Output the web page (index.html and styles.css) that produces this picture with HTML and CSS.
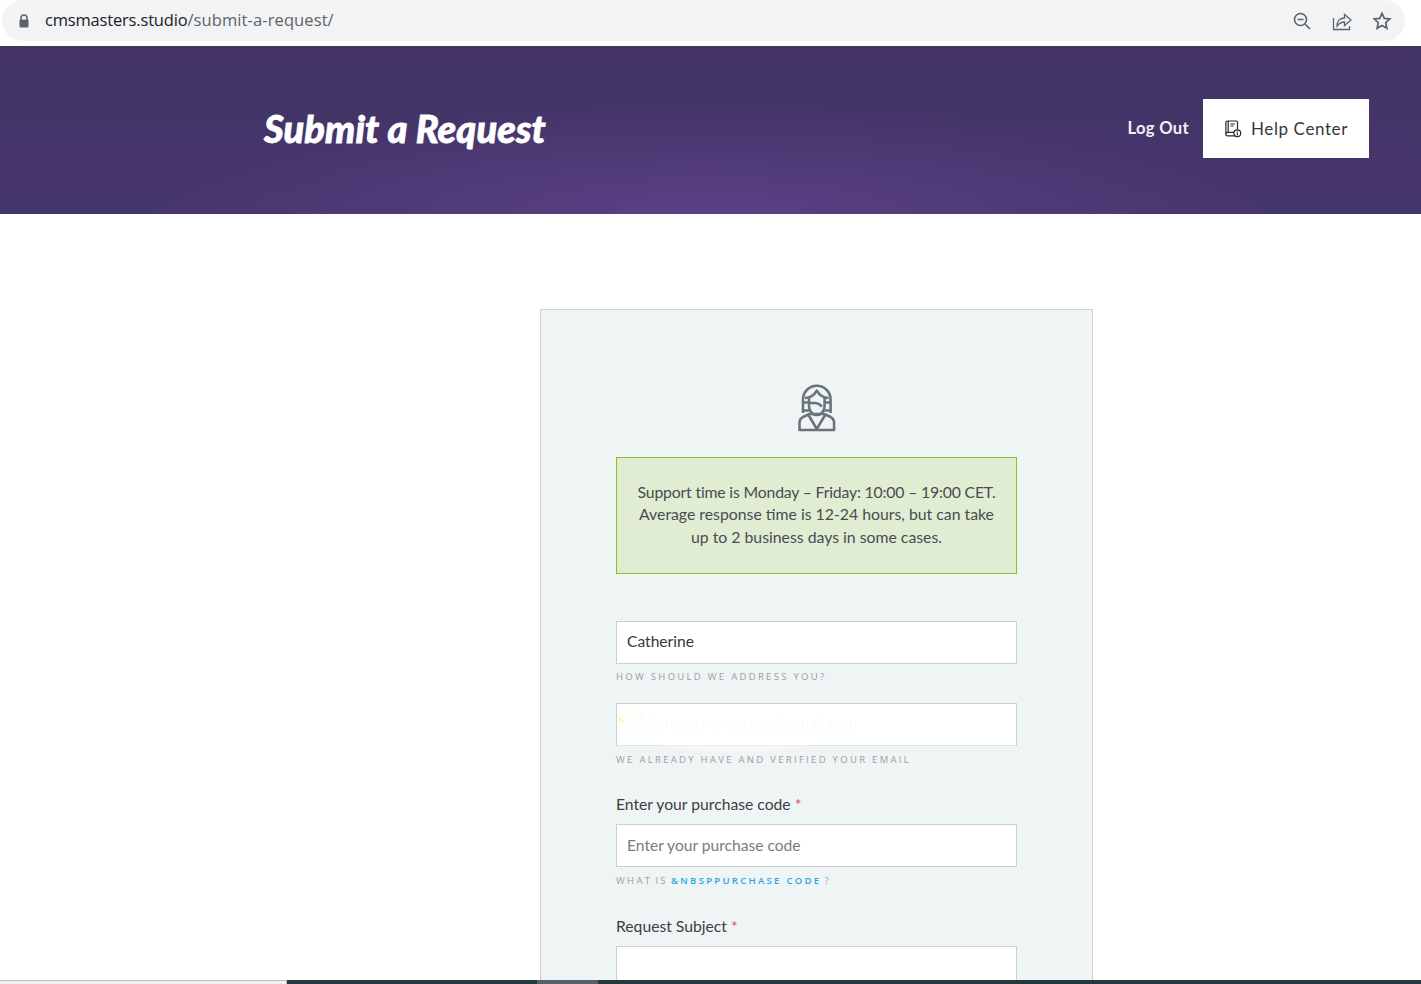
FILE: index.html
```html
<!DOCTYPE html>
<html lang="en">
<head>
<meta charset="utf-8">
<title>Submit a Request</title>
<link rel="stylesheet" href="styles.css">
</head>
<body>
<div class="browser-bar">
  <div class="omnibox">
    <svg class="lock" width="12" height="14" viewBox="0 0 12 14"><path d="M3 6V4a3 3 0 0 1 6 0v2" fill="none" stroke="#5f6368" stroke-width="1.5"/><rect x="1.5" y="5.5" width="9" height="8" rx="1" fill="#5f6368"/></svg>
    <div class="url"><span class="host">cmsmasters.studio</span><span class="path">/submit-a-request/</span></div>
    <div class="tools">
      <svg width="20" height="20" viewBox="0 0 20 20" fill="none" stroke="#5f6368" stroke-width="1.6"><circle cx="8.5" cy="8.5" r="6"/><path d="M5.5 8.5h6M13 13l5 5"/></svg>
      <svg width="20" height="20" viewBox="0 0 20 20" fill="none" stroke="#5f6368" stroke-width="1.3"><path d="M1.500 7v11.500h16V15"/><path d="M5 15c0-5 3-8 7.500-8V3.500l6.500 5.500-6.500 5.500V11C9 11 7 12.500 5 15z"/></svg>
      <svg width="20" height="20" viewBox="0 0 20 20" fill="none" stroke="#5f6368" stroke-width="1.7"><path d="M10 2.300l2.300 5.100 5.500.6-4.100 3.700 1.200 5.500L10 14.400l-4.900 2.800 1.200-5.500L2.200 8l5.500-.6z"/></svg>
    </div>
  </div>
</div>
<header class="hero">
  <h1 class="hero-title">Submit a Request</h1>
  <nav class="hero-nav">
    <a class="logout">Log Out</a>
    <a class="help">
      <svg width="18" height="18" viewBox="0 0 18 18" fill="none" stroke="#2b2b2b" stroke-width="1.2"><path d="M11.500 15.800H3.500a1.600 1.600 0 0 1-1.600-1.600V2.200A1.200 1.200 0 0 1 3.100 1h9.400a1 1 0 0 1 1 1v7.500"/><path d="M1.900 14c0-1 .7-1.700 1.700-1.700h6.400M4.200 1v11.300"/><path d="M6.500 4h4.500M6.500 6h3"/><circle cx="13.300" cy="13.300" r="3.400"/><path d="M13.300 12.500v3M13.300 10.900v.8"/></svg>
      <span>Help Center</span>
    </a>
  </nav>
</header>
<main class="page">
  <section class="card">
    <svg class="agent" width="38" height="48" viewBox="0 0 38 48" fill="none" stroke="#6b747d" stroke-width="2.6" stroke-linejoin="round">
      <path d="M5 29V15.500a13.800 13.800 0 0 1 27.600 0V29"/>
      <path d="M7 14c5 0 9-2.500 11.800-7.300C21.600 11.500 26 14 30.600 14"/>
      <path d="M5 18.500h6M26.600 18.500h6M5 26.500h6M26.600 26.500h6"/>
      <path d="M11 14v8c0 5 3.500 9 7.800 9s7.800-4 7.800-9v-8"/>
      <path d="M11 19h6c3 0 5 1.500 7 3.500"/>
      <path d="M1.500 46v-7c0-3 1.500-5 4-6.300l6-2.700h14.600l6 2.700c2.500 1.300 4 3.300 4 6.300v7z"/>
      <path d="M10.500 31l8.300 14 8.300-14"/>
    </svg>
    <div class="notice">
      <p><span class="notice-first">Support time is Monday – Friday: 10:00 – 19:00 CET.</span><br>Average response time is 12-24 hours, but can take<br>up to 2 business days in some cases.</p>
    </div>
    <form class="form">
      <div class="field field-first">
        <div class="input"><span class="input-text">Catherine</span></div>
        <div class="hint">How should we address you?</div>
      </div>
      <div class="field field-second">
        <div class="input input-email">
          <span class="input-text ghost">catherine.cmsmasters@gmail.com</span>
          <svg class="glint" width="30" height="22" viewBox="0 0 30 22" fill="none"><path d="M1.500 12.500L17 2l10 7-15 10z" stroke="#fbfbd8" stroke-width="1.200" opacity=".7"/><path d="M1.500 12.500l4 3" stroke="#f7f78a" stroke-width="2.500" opacity=".8"/></svg>
          <span class="smudge"></span>
        </div>
        <div class="hint hint-low">We already have and verified your email</div>
      </div>
      <div class="field field-code">
        <label class="label">Enter your purchase code <span class="req">*</span></label>
        <div class="input placeholder"><span class="input-text">Enter your purchase code</span></div>
        <div class="hint hint-low hint-tight">What is <a class="hint-link">&amp;nbsppurchase code</a> ?</div>
      </div>
      <div class="field field-subject">
        <label class="label">Request Subject <span class="req">*</span></label>
        <div class="input input-tall"></div>
      </div>
    </form>
  </section>
</main>
<div class="scrollbar"><div class="track"></div><div class="thumb-bar"><span class="thumb"></span></div></div>
</body>
</html>
```
FILE: styles.css
```css
* { box-sizing: border-box; }
html, body { margin: 0; height: 984px; overflow: hidden; }
body {
  display: flex;
  flex-direction: column;
  background: #fff;
  font-family: "Lato", "Noto Sans", sans-serif;
  color: #3a3f44;
}
.browser-bar {
  height: 46px;
  flex: none;
  padding: 0 16px 5px 2px;
  background: #fff;
}
.omnibox {
  height: 41px;
  background: #f1f3f4;
  border-radius: 21px;
  display: flex;
  align-items: center;
  padding-left: 16px;
  padding-right: 13px;
}
.lock { flex: none; margin-right: 15px; }
.url {
  font-family: "Open Sans", sans-serif;
  font-size: 16.5px;
  color: #5f6368;
  margin-top: -2px;
}
.host { color: #202124; letter-spacing: -.18px; }
.path { letter-spacing: .1px; }
.tools { margin-left: auto; display: flex; gap: 20px; align-items: center; }
.hero {
  flex: none;
  height: 168px;
  background:
    radial-gradient(ellipse 560px 110px at 50% 100%, #5d4086 0%, rgba(93,64,134,.5) 45%, rgba(93,64,134,0) 100%),
    linear-gradient(180deg, #423364 0%, #46366e 100%);
  display: flex;
  align-items: center;
  padding: 0 52px 4px 264px;
}
.hero-title {
  margin: 0;
  font-size: 38px;
  font-weight: 900;
  font-style: italic;
  letter-spacing: .1px;
  -webkit-text-stroke: .8px #fff;
  color: #fff;
}
.hero-nav { margin-left: auto; display: flex; align-items: center; gap: 14px; }
.logout { font-size: 16.6px; font-weight: 700; letter-spacing: .3px; color: #f2eff6; }
.help {
  width: 166px;
  height: 59px;
  padding-top: 1px;
  background: #fff;
  display: flex;
  align-items: center;
  justify-content: center;
  gap: 9px;
  font-size: 17px;
  letter-spacing: .6px;
  color: #33373b;
}
.page {
  flex: 1;
  min-height: 0;
  overflow: hidden;
  padding: 95px 0 0 540px;
}
.card {
  width: 553px;
  height: 720px;
  background: #eff4f4;
  border: 1px solid #ccd0d0;
  padding: 74px 75px 0;
  display: flex;
  flex-direction: column;
}
.agent { align-self: center; flex: none; display: block; }
.notice {
  margin-top: 25px;
  height: 117px;
  border: 1px solid #8fc31f;
  background: #e1edd3;
  display: flex;
  align-items: center;
  justify-content: center;
  text-align: center;
  padding-bottom: 2px;
}
.notice p {
  margin: 0;
  font-size: 15.8px;
  line-height: 22.5px;
  color: #474c50;
}
.notice-first { letter-spacing: -.18px; }
.form { display: flex; flex-direction: column; }
.field { display: flex; flex-direction: column; }
.field-first { margin-top: 47px; }
.field-second { margin-top: 20px; }
.field-code { margin-top: 29px; }
.field-subject { margin-top: 30px; }
.input {
  height: 43px;
  background: #fff;
  border: 1px solid #ccd0d0;
  padding: 0 10px 3px;
  display: flex;
  align-items: center;
  font-size: 15.6px;
  color: #33373b;
}
.input-tall { height: 60px; }
.placeholder { color: #777c80; padding-bottom: 2px; }
.input-email { position: relative; border-bottom-color: #dfe3e3; }
.ghost { color: #f8fafa; filter: blur(.5px); }
.glint { position: absolute; left: 0; top: 2px; }
.smudge {
  position: absolute;
  left: 45px;
  top: 41px;
  width: 145px;
  height: 6px;
  border-radius: 0 0 72px 72px / 0 0 6px 6px;
  background: rgba(255,255,255,.35);
}
.hint {
  margin-top: 7px;
  height: 12px;
  line-height: 12px;
  font-family: "Open Sans", sans-serif;
  font-size: 9.5px;
  letter-spacing: 2.3px;
  text-transform: uppercase;
  color: #9a9fa3;
}
.hint-low { margin-top: 8px; }
.hint-tight { word-spacing: -1.6px; }
.hint-link { color: #29a9e0; font-weight: 600; word-spacing: 0; }
.label {
  height: 20px;
  line-height: 18px;
  margin-bottom: 9px;
  font-size: 15.7px;
  color: #3a3f44;
}
.req { color: #d8476b; }
.scrollbar { flex: none; height: 4px; display: flex; }
.track { width: 287px; background: #f1f1f1; border-top: 1px solid #bdbdbd; border-right: 1px solid #bdbdbd; }
.thumb-bar { flex: 1; background: #233840; padding-left: 250px; }
.thumb { display: block; width: 61px; height: 4px; background: #566168; }
```
